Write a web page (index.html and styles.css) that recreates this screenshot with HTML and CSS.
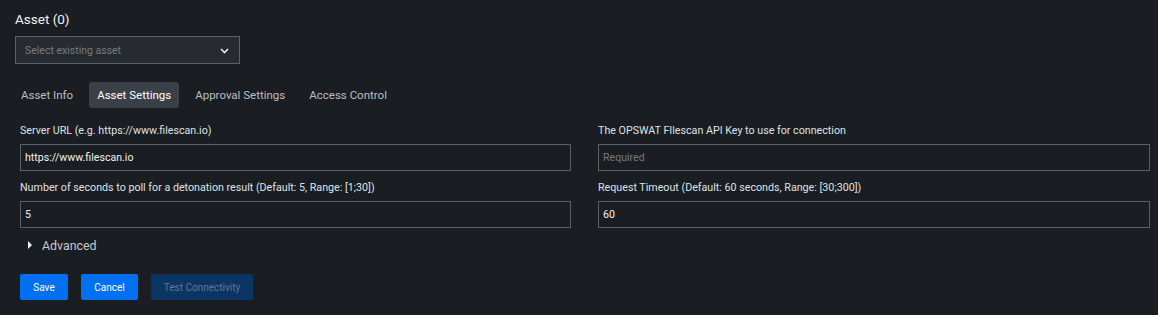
FILE: index.html
```html
<!DOCTYPE html>
<html lang="en">
<head>
<meta charset="UTF-8">
<title>Asset Settings</title>
<meta name="viewport" content="width=device-width, initial-scale=1.0">
<link rel="stylesheet" href="styles.css">
</head>

<body>

<section class="asset">
<h2>Asset (0)</h2>
<div class="select">
<span>Select existing asset</span>
<svg width="9" height="6" viewBox="0 0 9 6"><path d="M1 1l3.5 3.5L8 1" fill="none" stroke="#e8eaed" stroke-width="1.6"/></svg>
</div>
</section>

<nav class="tabs">
<a>Asset Info</a>
<a class="on">Asset Settings</a>
<a>Approval Settings</a>
<a>Access Control</a>
</nav>

<section class="form">
<div class="grid">
<div class="field">
<label>Server URL (e.g. https://www.filescan.io)</label>
<input value="https://www.filescan.io">
</div>
<div class="field">
<label>The OPSWAT FIlescan API Key to use for connection</label>
<input placeholder="Required">
</div>
<div class="field">
<label>Number of seconds to poll for a detonation result (Default: 5, Range: [1;30])</label>
<input value="5">
</div>
<div class="field">
<label>Request Timeout (Default: 60 seconds, Range: [30;300])</label>
<input value="60">
</div>
</div>

<div class="adv">
<svg width="4" height="8" viewBox="0 0 4 8"><path d="M0 0l4 4-4 4z" fill="#f2f3f5"/></svg>
<span>Advanced</span>
</div>

<div class="btns">
<button class="blue save">Save</button>
<button class="blue cancel">Cancel</button>
<button class="off" disabled>Test Connectivity</button>
</div>
</section>

</body>
</html>
```

FILE: styles.css
```css
*{box-sizing:border-box}
body{margin:0;font-family:Roboto,"Liberation Sans",sans-serif;background:#1a1d21;color:#e4e6e9;height:315px;overflow:hidden}
.asset{padding:10px 15px 0}
.asset h2{margin:0;font-size:13.5px;font-weight:400;color:#f1f2f4;line-height:18px}
.select{width:225px;height:28px;margin-top:8px;border:1px solid #5a6068;background:#272b31;display:flex;align-items:center;justify-content:space-between;padding:0 10px 0 9px;font-size:10.5px;color:#767c85}
.select svg{margin-top:1px}
.tabs{display:flex;gap:8px;padding:18px 0 0 13px}
.tabs a{font-size:11.5px;color:#b9bec6;height:26px;line-height:26px;padding:0 8px;border-radius:3px}
.tabs a.on{background:#3b4048;color:#fff}
.form{padding:16px 8px 0 20px}
.grid{display:grid;grid-template-columns:551px 552px;column-gap:27px}
.field label{display:block;font-size:10.7px;color:#dfe2e6;line-height:14px;margin-bottom:6px}
.field input{display:block;width:100%;height:27px;margin:0 0 10px;border:1px solid #5a6068;background:#1a1d21;color:#f1f2f4;font:10.6px Roboto,"Liberation Sans",sans-serif;padding:0 4px}
.field input::placeholder{color:#737982}
.adv{display:flex;align-items:center;gap:10px;padding:0 0 0 8px;height:14px;font-size:12.4px;color:#c6cad0}
.btns{display:flex;gap:13px;margin-top:22px}
button{height:26px;border:0;border-radius:2px;font:10px Roboto,"Liberation Sans",sans-serif;padding:0;color:#fff}
.blue{background:#0070f0}
.save{width:48px}
.cancel{width:57px}
.off{background:#0b3565;color:#66768c;width:102px}
```
